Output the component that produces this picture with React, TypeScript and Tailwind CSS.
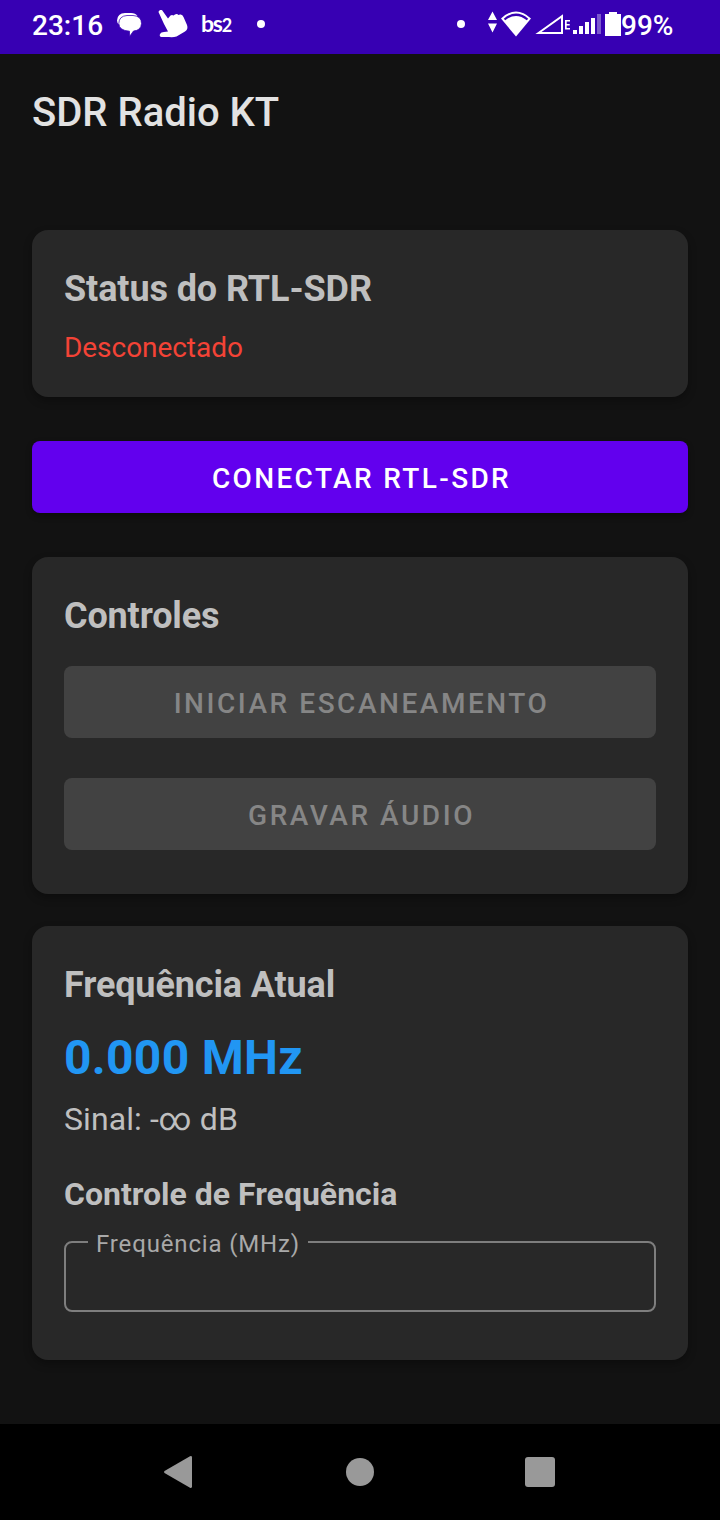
import React from "react";

function Card({ className, children }: { className: string; children: React.ReactNode }) {
  return (
    <section className={`flex flex-col rounded-[16px] bg-[#282828] px-8 shadow-[0_4px_8px_rgba(0,0,0,0.3)] ${className}`}>
      {children}
    </section>
  );
}

function StatusBar() {
  return (
    <header className="flex h-[54px] shrink-0 items-center bg-[#3700b3] pr-[48px] pb-[6px] pl-8 text-white">
      <span className="w-[84px] shrink-0 pt-[3px] text-[28px] leading-[48px] font-medium">23:16</span>
      <svg className="mt-[2px] h-[26px] w-[27px] shrink-0" viewBox="0 0 27 26" fill="white">
        <path d="M9 1H15Q19.500 1 21.500 4L12 8L3 12.500Q1 11 1 8.500Q1.500 1 9 1Z" />
        <path
          d="M11 3.500H17Q25.500 4 25.500 11.500Q25 18.500 17.500 19L13.500 24.500V19.200Q3 18.500 2.800 11.500Q3 4 11 3.500Z"
          stroke="#3700b3"
          strokeWidth="1"
          strokeOpacity=".75"
        />
      </svg>
      <svg className="ml-[14px] h-[30px] w-[32px] shrink-0" viewBox="0 0 32 30" fill="white">
        <path d="M1.500 3C2.500 .5 5 .5 6 2.500L11 9.500L13.500 6.500Q15 5.500 16.500 6.500L18 5.500Q20 4.500 21.500 6L23 5.500Q25.500 5 26.500 8L30 16Q31.500 20 28 22.500L19.500 27.500Q16 28.500 12 28H4.500Q2 27.500 3 25Q4 23 7 23L11 22.500L7 15Z" />
      </svg>
      <span className="ml-[12px] w-[56px] shrink-0 font-['Lato'] text-[23px] leading-[30px] font-bold tracking-[-1.2px]">
        bs<span className="text-[18px]">2</span>
      </span>
      <span className="h-2 w-2 rounded-full bg-white" />
      <span className="mr-[22px] ml-auto h-2 w-2 rounded-full bg-white" />
      <svg className="h-[48px] w-[134px] shrink-0" viewBox="487 0 134 48" fill="white">
        <path d="M488 20L492.500 11.500L497 20ZM488 23.500H497L492.500 32.500Z" />
        <path d="M501 18.500Q516 4.500 531 18.500L516 36.500Z" />
        <path d="M504.500 19.500Q516 10 527.500 19.500" fill="none" stroke="#3700b3" strokeWidth="2.200" />
        <path d="M538.500 33L562 16.200V33Z" fill="none" stroke="white" strokeWidth="2" />
        <path d="M565 20H570V21.500H566.700V24H569.700V25.500H566.700V28H570V29.500H565Z" />
        <path d="M573 30H577V34H573ZM579 26H583V34H579ZM585 22H589V34H585ZM591 18H595V34H591Z" />
        <path d="M597 14H601V34H597Z" opacity=".35" />
        <path d="M605 14H609V12H617V14H621V36H605Z" />
      </svg>
      <span className="w-[51px] shrink-0 pt-[3px] text-[28px] leading-[48px] font-medium">99%</span>
    </header>
  );
}

function DisabledButton({ children }: { children: React.ReactNode }) {
  return (
    <button className="flex h-[72px] items-center justify-center rounded-[8px] bg-[#424242] pt-[3px] pl-[3px] text-[28px] font-medium tracking-[2.54px] text-[#868686]">
      {children}
    </button>
  );
}

export default function App() {
  return (
    <div className="flex h-[1520px] w-[720px] flex-col overflow-hidden bg-[#121212] font-['Roboto',sans-serif]">
      <StatusBar />
      <h1 className="mt-[35px] px-8 text-[40px] leading-[48px] font-medium text-[#e2e2e2]">SDR Radio KT</h1>
      <main className="mt-[93px] flex flex-1 flex-col px-8">
        <Card className="h-[167px] pt-[38px]">
          <h2 className="text-[36px] leading-[42px] font-bold tracking-[-0.1px] text-[#bfbfbf]">Status do RTL-SDR</h2>
          <p className="mt-[22px] text-[28px] leading-[32px] tracking-[-0.05px] text-[#f44336]">Desconectado</p>
        </Card>
        <button className="mt-[44px] flex h-[72px] items-center justify-center rounded-[8px] bg-[#6200ee] pt-[3px] pl-[3px] text-[28px] font-medium tracking-[2.37px] text-white shadow-[0_3px_6px_rgba(0,0,0,0.3)]">
          CONECTAR RTL-SDR
        </button>
        <Card className="mt-[44px] h-[337px] pt-[38px]">
          <h2 className="text-[36px] leading-[42px] font-bold tracking-[-0.15px] text-[#bfbfbf]">Controles</h2>
          <div className="mt-[29px] flex flex-col gap-10">
            <DisabledButton>INICIAR ESCANEAMENTO</DisabledButton>
            <DisabledButton>GRAVAR ÁUDIO</DisabledButton>
          </div>
        </Card>
        <Card className="mt-8 h-[434px] pt-[38px]">
          <h2 className="text-[36px] leading-[42px] font-bold tracking-[-0.13px] text-[#bfbfbf]">Frequência Atual</h2>
          <p className="mt-[24px] text-[48px] leading-[56px] font-bold tracking-[0.28px] text-[#2196f3]">0.000 MHz</p>
          <p className="mt-[14px] text-[32px] leading-[38px] tracking-[0.08px] text-[#bfbfbf]">Sinal: -∞ dB</p>
          <h3 className="mt-[37px] text-[32px] leading-[38px] font-bold text-[#bfbfbf]">Controle de Frequência</h3>
          <fieldset className="mt-[15px] h-[84px] rounded-[8px] border-2 border-[#7e7e7e] pl-[22px]">
            <legend className="w-[220px] pt-[4px] pl-[8px] text-[24px] leading-[24px] tracking-[0.85px] whitespace-nowrap text-[#a9a9a9]">
              Frequência (MHz)
            </legend>
          </fieldset>
        </Card>
      </main>
      <nav className="flex h-24 shrink-0 items-center bg-black pl-[162px]">
        <svg className="h-9 w-8" viewBox="0 0 32 36" fill="#999">
          <path d="M2.500 17L28 2.200Q30 1.500 30 3.500V32.500Q30 34.500 28 33.800L2.500 19Q1.500 18 2.500 17Z" />
        </svg>
        <span className="ml-[152px] h-7 w-7 rounded-full bg-[#999]" />
        <span className="ml-[151px] h-[30px] w-[30px] rounded-[3px] bg-[#999]" />
      </nav>
    </div>
  );
}
